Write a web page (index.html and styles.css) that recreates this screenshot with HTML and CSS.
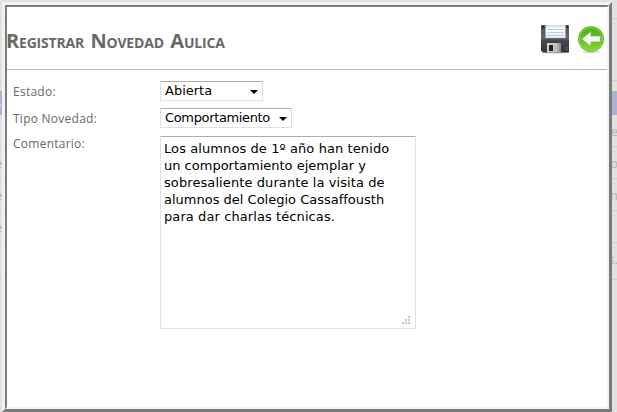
FILE: index.html
```html
<!DOCTYPE html>
<html lang="es">
<head>
<meta charset="utf-8">
<title>Registrar Novedad Aulica</title>
<link rel="stylesheet" href="styles.css">
</head>
<body>
<div class="backdrop">
  <div class="row r1"></div>
  <div class="row r2"></div>
  <div class="row head"><span>s</span></div>
  <div class="row r3"><span>\</span><span>te</span></div>
  <div class="row r4"><span>e</span><span>o</span></div>
  <div class="row r4"><span>e</span><span>n</span></div>
  <div class="row r4"><span>e</span></div>
  <div class="row r5"><span>(</span><span>s.</span></div>
  <div class="row r6"></div>
</div>
<main class="dialog">
  <div class="panel">
    <header class="top">
      <h1>Registrar Novedad Aulica</h1>
      <div class="tools">
        <svg class="save" width="30" height="30" viewBox="0 0 30 30">
          <defs>
            <linearGradient id="body" x2="0" y2="1"><stop stop-color="#505053"/><stop offset=".48" stop-color="#68686b"/><stop offset=".56" stop-color="#48484b"/><stop offset="1" stop-color="#343437"/></linearGradient>
            <linearGradient id="paper" x2="0" y2="1"><stop stop-color="#c4d9ec"/><stop offset=".3" stop-color="#fff"/><stop offset="1" stop-color="#dce9f5"/></linearGradient>
            <linearGradient id="metal"><stop stop-color="#d4d4d4"/><stop offset=".7" stop-color="#bcbcbc"/><stop offset="1" stop-color="#858585"/></linearGradient>
          </defs>
          <ellipse cx="15" cy="28.5" rx="14" ry="1" fill="#ccc"/>
          <path d="M1.500 1h27l.5.5V28l-.5.5H3L1 26.500V1.500z" fill="url(#body)"/>
          <path d="M2 2h2v2H2zM26.500 2h1.500v2h-1.500z" fill="#29292c"/>
          <path d="M5.500 1h20v13h-20z" fill="url(#paper)"/>
          <path d="M7 5.500h17M7 8.500h17M7 11.500h17" stroke="#b9d1e7"/>
          <path d="M7 19h14v9.500H7z" fill="url(#metal)"/>
          <path d="M9 21h4v6H9z" fill="#202024"/>
          <path d="M26 23h2v3h-2z" fill="none" stroke="#707074" stroke-width=".6"/>
        </svg>
        <svg class="back" width="28" height="30" viewBox="0 0 28 30">
          <defs>
            <linearGradient id="green" x2="0" y2="1"><stop stop-color="#4fae1c"/><stop offset=".5" stop-color="#62c021"/><stop offset="1" stop-color="#83dc28"/></linearGradient>
          </defs>
          <ellipse cx="14" cy="28" rx="9" ry="1.500" fill="#ddd"/>
          <circle cx="14" cy="15" r="12.600" fill="url(#green)" stroke="#52b01e" stroke-width=".8"/>
          <circle cx="14" cy="15" r="11.600" fill="none" stroke="#a4e65c" stroke-width=".7"/>
          <path d="M4.500 15L14 7.500V12h9.500v6H14v4.500z" fill="#f3f3f3" stroke="#70a84d" stroke-width=".6"/>
        </svg>
      </div>
    </header>
    <form class="form">
      <div class="field f1"><label>Estado:</label><div class="select s1"><span>Abierta</span><i></i></div></div>
      <div class="field f2"><label>Tipo Novedad:</label><div class="select s2"><span>Comportamiento</span><i></i></div></div>
      <div class="field f3"><label>Comentario:</label>
        <div class="area">
          <p class="wide">Los alumnos de 1º año han tenido</p>
          <p>un comportamiento ejemplar y</p>
          <p class="wide">sobresaliente durante la visita de</p>
          <p>alumnos del Colegio Cassaffousth</p>
          <p class="wide">para dar charlas técnicas.</p>
          <svg class="grip" width="8" height="8" viewBox="0 0 8 8"><path d="M6 0h2v2H6zM3 3h2v2H3zM6 3h2v2H6zM0 6h2v2H0zM3 6h2v2H3zM6 6h2v2H6z" fill="#c6c6c6"/></svg>
        </div>
      </div>
    </form>
  </div>
</main>
</body>
</html>
```
FILE: styles.css
```css
* { box-sizing: border-box; }
body { margin: 0; width: 617px; height: 412px; overflow: hidden; position: relative; background: #e1e1e1; }
.backdrop { width: 617px; height: 412px; display: flex; flex-direction: column; font: 13px/32px "Open Sans", sans-serif; color: #b4b4b4; }
.row { display: flex; justify-content: space-between; border-bottom: 1px solid #cfcfcf; flex: none; overflow: hidden; }
.row span:first-child { margin-left: -5px; }
.row span:last-child:not(:first-child) { margin-right: -1px; }
.r1 { height: 19px; }
.r2 { height: 62px; }
.head { height: 24px; margin-top: 10px; background: #aab4d0; color: #e8ebf3; line-height: 22px; border: 0; }
.r3 { height: 32px; }
.r4 { height: 32px; }
.r5 { height: 37px; }
.r6 { flex: 1; border: 0; }
.dialog { position: absolute; left: 2px; top: 2px; width: 610px; height: 410px; border: 3px solid; border-color: #f2f2f2 #7b7b7b #7b7b7b #f2f2f2; }
.panel { height: 100%; border: 2px solid; border-color: #7b7b7b #f2f2f2 #f2f2f2 #7b7b7b; background: #fff; }
.top { height: 63px; border-bottom: 1px solid #bababa; display: flex; justify-content: space-between; }
h1 { margin: 18px 0 0 -1px; font: bold 20px/32px "Open Sans", sans-serif; font-variant: small-caps; color: #696969; white-space: nowrap; letter-spacing: -.2px; word-spacing: 1.5px; }
.tools { display: flex; gap: 7px; padding: 17px 2px 0 0; }
.form { padding: 11px 0 0 6px; }
.field { display: flex; align-items: flex-start; }
.field label { width: 147px; flex: none; font: 12px/20px "Open Sans", sans-serif; color: #696969; white-space: nowrap; letter-spacing: .25px; margin-top: 1px; }
.select { height: 20px; border: 1px solid #dde0ea; border-top-color: #abadb3; border-radius: 1px; display: flex; align-items: center; justify-content: space-between; padding: 0 4px; font: 13px/18px "DejaVu Sans", sans-serif; color: #000; white-space: nowrap; }
.select i { border: 4px solid transparent; border-top-color: #000; border-bottom: 0; flex: none; margin-top: 2px; }
.s1 { width: 103px; }
.s2 { width: 132px; }
.s2 span { letter-spacing: -.35px; }
.f1 { margin-bottom: 6px; }
.f2 { margin-bottom: 7px; }
.f3 label { margin-top: -2px; }
.area { position: relative; width: 256px; height: 193px; border: 1px solid #dde0ea; border-top-color: #abadb3; border-radius: 1px; padding: 3px; font: 13px/17px "DejaVu Sans", sans-serif; color: #000; }
.area p { margin: 0; white-space: nowrap; }
.area .wide { letter-spacing: .09px; }
.grip { position: absolute; right: 5px; bottom: 4px; }
```
